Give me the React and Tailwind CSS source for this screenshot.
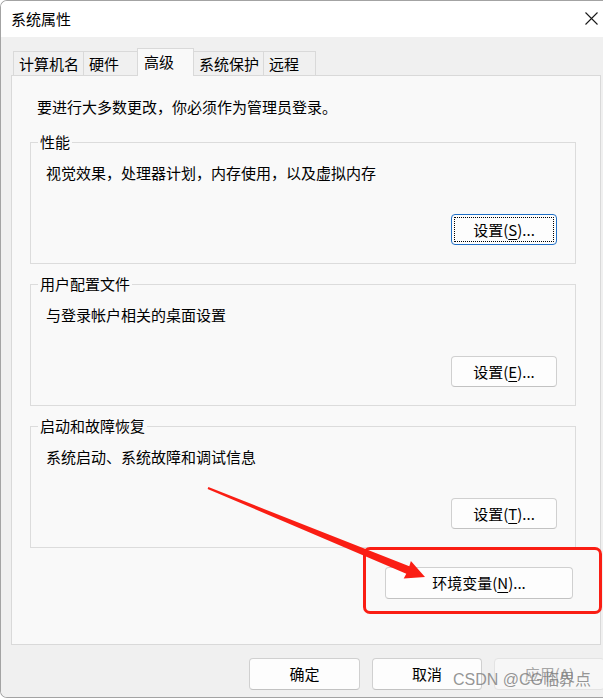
import React from "react";

const tabs = [
  { label: "计算机名", w: "w-[71px]" },
  { label: "硬件", w: "w-[55px]" },
  { label: "高级", w: "w-[57px]", active: true },
  { label: "系统保护", w: "w-[71px]" },
  { label: "远程", w: "w-[53px]" },
];

const groups = [
  { title: "性能", desc: "视觉效果，处理器计划，内存使用，以及虚拟内存", key: "S", focused: true },
  { title: "用户配置文件", desc: "与登录帐户相关的桌面设置", key: "E" },
  { title: "启动和故障恢复", desc: "系统启动、系统故障和调试信息", key: "T" },
];

function Mnemonic({ before, letter, after }) {
  return (
    <span>
      {before}
      <span className="underline underline-offset-[3px] decoration-1">{letter}</span>
      {after}
    </span>
  );
}

const App = () => {
  return (
    <div className="relative w-[603px] h-[698px] overflow-hidden bg-white font-['Noto_Sans_CJK_SC',sans-serif] text-[15px] text-black">
      {/* 窗口 */}
      <div className="flex flex-col w-[620px] h-[698px] border-t border-l border-b border-[#a3a3a3] rounded-tl-[7px] rounded-bl-[7px] overflow-hidden">
        {/* 标题栏 */}
        <div className="flex items-center justify-between h-[36px] bg-white pl-[10px] pr-[22px] shrink-0">
          <span className="leading-[20px]">系统属性</span>
          <svg width="13" height="13" viewBox="0 0 13 13" className="mt-[-1px]">
            <path d="M0.5 0.5 L12.5 12.5 M12.5 0.5 L0.5 12.5" stroke="#1a1a1a" strokeWidth="1.1" fill="none" />
          </svg>
        </div>

        {/* 内容 */}
        <div className="flex-1 bg-[#f0f0f0] pl-[10px] pt-[11px]">
          {/* 选项卡 */}
          <div className="relative z-10 -mb-px ml-[2px] flex items-end">
            {tabs.map((t, i) =>
              t.active ? (
                <div
                  key={i}
                  className={`relative z-10 -ml-px ${t.w} h-[28px] flex items-center pl-[6px] border-t border-l border-r border-[#d9d9d9] bg-[#f9f9f9] leading-[20px] pb-[2px]`}
                >
                  {t.label}
                </div>
              ) : (
                <div
                  key={i}
                  className={`${i > 0 ? "-ml-px" : ""} ${t.w} h-[25px] flex items-center pl-[5px] border border-[#d9d9d9] bg-[#f0f0f0] leading-[20px]`}
                >
                  {t.label}
                </div>
              )
            )}
          </div>

          {/* 面板 */}
          <div className="w-[590px] h-[570px] border border-[#d9d9d9] bg-[#f9f9f9] pl-[18px] pt-[21px]">
            <div className="ml-[7px] leading-[20px]">要进行大多数更改，你必须作为管理员登录。</div>

            {groups.map((g, i) => (
              <fieldset
                key={i}
                className={`${i === 0 ? "mt-[15px]" : "mt-[10px]"} w-[546px] border border-[#dcdcdc] pb-[18px]`}
              >
                <legend className="ml-[7px] px-[2px] leading-[20px]">{g.title}</legend>
                <div className="pl-[15px] pt-[11px] leading-[20px]">{g.desc}</div>
                <div className="flex justify-end pr-[18px] mt-[31px]">
                  {g.focused ? (
                    <button className="relative w-[106px] h-[31px] rounded-[4px] border-[1.5px] border-[#1f6fc5] bg-[#fdfdfd] leading-[20px] flex items-center justify-center">
                      <span className="absolute inset-[2px] border border-dotted border-black rounded-[1px]"></span>
                      <Mnemonic before="设置(" letter={g.key} after=")..." />
                    </button>
                  ) : (
                    <button className="w-[106px] h-[31px] rounded-[4px] border border-[#d0d0d0] border-b-[#c2c2c2] bg-[#fdfdfd] leading-[20px] flex items-center justify-center">
                      <Mnemonic before="设置(" letter={g.key} after=")..." />
                    </button>
                  )}
                </div>
              </fieldset>
            ))}

            <div className="w-[546px] flex justify-end pr-[3px] mt-[19px]">
              <button className="w-[188px] h-[32px] rounded-[4px] border border-[#d0d0d0] border-b-[#c2c2c2] bg-[#fdfdfd] leading-[20px] flex items-center justify-center">
                <Mnemonic before="环境变量(" letter="N" after=")..." />
              </button>
            </div>
          </div>

          {/* 底部按钮 */}
          <div className="flex gap-[12px] pl-[238px] mt-[13px]">
            <button className="w-[111px] h-[32px] shrink-0 rounded-[4px] border border-[#d0d0d0] border-b-[#c2c2c2] bg-[#fdfdfd] leading-[20px]">
              确定
            </button>
            <button className="w-[110px] h-[32px] shrink-0 rounded-[4px] border border-[#d0d0d0] border-b-[#c2c2c2] bg-[#fdfdfd] leading-[20px]">
              取消
            </button>
            <button className="w-[111px] h-[32px] shrink-0 rounded-[4px] border border-[#e3e3e3] bg-[#f7f7f7] text-[#a6a6a6] leading-[20px]">
              <Mnemonic before="应用(" letter="A" after=")" />
            </button>
          </div>
        </div>
      </div>

      {/* 红色标注 */}
      <div className="absolute left-[363px] top-[547px] w-[239px] h-[67px] border-[3px] border-[#fa1e14] rounded-[7px]"></div>
      <svg className="absolute left-0 top-0 pointer-events-none" width="603" height="698">
        <polygon
          points="208.4,487.1 409.3,566.3 410.9,561.0 425,577 403.7,578.6 406.3,573.7 207.6,488.9"
          fill="#fa1e14"
        />
      </svg>

      {/* 水印 */}
      <div className="absolute left-[453px] top-[669px] text-[16px] leading-[22px] text-[#7a7a7a]/80 font-['Liberation_Sans','Noto_Sans_CJK_SC',sans-serif]">
        CSDN @CG临界点
      </div>
    </div>
  );
};

export default App;
